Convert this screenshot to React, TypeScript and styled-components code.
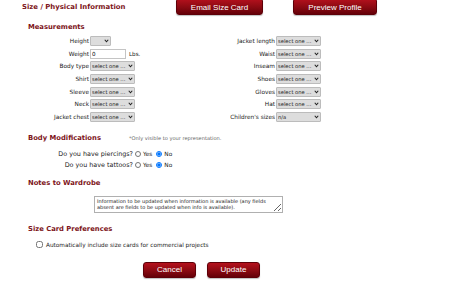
import styled, { createGlobalStyle } from "styled-components";

const GlobalStyle = createGlobalStyle`
  body {
    margin: 0;
    background: #FFFFFF;
    font-family: "DejaVu Sans", Verdana, sans-serif;
    color: #222;
  }
`;

const Page = styled.div`
  width: 460px;
  height: 293px;
  overflow: hidden;
`;

const TopBar = styled.div`
  display: flex;
  align-items: flex-start;
  height: 22px;
`;

const PageTitle = styled.h1`
  margin: 3px 0 0 22px;
  width: 154px;
  font-size: 6.9px;
  font-weight: bold;
  color: #7d1420;
  line-height: 9px;
`;

const RedButton = styled.button<{ $w: number }>`
  width: ${(p) => p.$w}px;
  height: 16px;
  padding: 0;
  border: 1px solid #5e0008;
  border-radius: 3px;
  background: linear-gradient(#b5111d, #8a0a12 55%, #650008);
  box-shadow: 0 1px 1px rgba(0, 0, 0, 0.25);
  color: #fff;
  font-family: "Liberation Sans", Arial, sans-serif;
  font-size: 8px;
  line-height: 14px;
`;

const TopButton = styled(RedButton)`
  margin-top: -2px;
  height: 17px;
  line-height: 17px;
`;

const Section = styled.section<{ $top: number }>`
  margin-top: ${(p) => p.$top}px;
  padding-left: 28px;
`;

const SectionTitle = styled.h2`
  margin: 0;
  font-size: 6.8px;
  font-weight: bold;
  color: #7d1420;
  line-height: 8px;
`;

const TitleRow = styled.div`
  display: flex;
  align-items: baseline;
`;

const Note = styled.span`
  margin-left: 28px;
  font-size: 5.1px;
  color: #666;
`;

const MeasureGrid = styled.div`
  display: grid;
  grid-template-columns: 62px 124px 62px auto;
  grid-auto-rows: 12.6px;
  align-items: center;
  margin-top: 4px;
`;

const Label = styled.label<{ $size?: number }>`
  text-align: right;
  padding-right: 1px;
  font-size: ${(p) => p.$size ?? 5.8}px;
  white-space: nowrap;
  color: #222;
`;

const Control = styled.div`
  display: flex;
  align-items: center;
  gap: 3px;
  font-size: 5.6px;
`;

const SelectWrap = styled.span<{ $w: number }>`
  position: relative;
  display: inline-block;
  width: ${(p) => p.$w}px;
  height: 10px;
`;

const Select = styled.select`
  appearance: none;
  width: 100%;
  height: 100%;
  box-sizing: border-box;
  padding: 0 0 0 1px;
  border: 1px solid #bcbcbc;
  border-radius: 1px;
  background: #dddddd;
  font-family: "DejaVu Sans", Verdana, sans-serif;
  font-size: 5.2px;
  color: #222;
`;

const Chevron = styled.svg`
  position: absolute;
  right: 2px;
  top: 3px;
  width: 5px;
  height: 4px;
  pointer-events: none;
`;

const TextInput = styled.input`
  width: 36px;
  height: 10px;
  box-sizing: border-box;
  padding: 0 1px;
  border: 1px solid #c4c4c4;
  font-family: "DejaVu Sans", Verdana, sans-serif;
  font-size: 5.6px;
`;

const QuestionGrid = styled.div`
  display: grid;
  grid-template-columns: 106px auto;
  grid-auto-rows: 10.5px;
  align-items: center;
  margin-top: 7px;
`;

const Radio = styled.input`
  width: 6px;
  height: 6px;
  margin: 0 2px 0 1px;
`;

const RadioText = styled.span`
  font-size: 5.8px;
  margin-right: 3px;
`;

const NotesBox = styled.textarea`
  display: block;
  margin: 9px 0 0 66px;
  width: 189px;
  height: 17px;
  box-sizing: border-box;
  padding: 1px 2px;
  resize: both;
  border: 1px solid #b0b0b0;
  font-family: "DejaVu Sans", Verdana, sans-serif;
  font-size: 5px;
  line-height: 6px;
  color: #222;
`;

const CheckRow = styled.label`
  display: flex;
  align-items: center;
  margin: 8px 0 0 8px;
  font-size: 5.75px;
  color: #222;
`;

const Check = styled.input`
  width: 7px;
  height: 7px;
  margin: 0 3px 0 0;
`;

const Actions = styled.div`
  display: flex;
  gap: 11px;
  margin: 14px 0 0 143px;
`;

const selectOne = "select one ...";

function Dropdown({ w, value }: { w: number; value: string }) {
  return (
    <SelectWrap $w={w}>
      <Select defaultValue={value}>
        <option value={value}>{value}</option>
      </Select>
      <Chevron viewBox="0 0 10 8">
        <path d="M1.5 1.5 L5 5.5 L8.5 1.5" fill="none" stroke="#222" strokeWidth="2.2" />
      </Chevron>
    </SelectWrap>
  );
}

const leftRows: [string, React.ReactNode][] = [
  ["Height", <Dropdown w={21} value="" />],
  ["Weight", <><TextInput defaultValue="0" /><span>Lbs.</span></>],
  ["Body type", <Dropdown w={45} value={selectOne} />],
  ["Shirt", <Dropdown w={45} value={selectOne} />],
  ["Sleeve", <Dropdown w={45} value={selectOne} />],
  ["Neck", <Dropdown w={45} value={selectOne} />],
  ["Jacket chest", <Dropdown w={45} value={selectOne} />],
];

const rightRows: [string, string][] = [
  ["Jacket length", selectOne],
  ["Waist", selectOne],
  ["Inseam", selectOne],
  ["Shoes", selectOne],
  ["Gloves", selectOne],
  ["Hat", selectOne],
  ["Children's sizes", "n/a"],
];

export default function App() {
  return (
    <Page>
      <GlobalStyle />
      <TopBar>
        <PageTitle>Size / Physical Information</PageTitle>
        <TopButton $w={87}>Email Size Card</TopButton>
        <TopButton $w={84} style={{ marginLeft: 30 }}>Preview Profile</TopButton>
      </TopBar>

      <Section $top={1}>
        <SectionTitle>Measurements</SectionTitle>
        <MeasureGrid>
          {leftRows.map(([label, control], i) => (
            <Row key={label} label={label} control={control} right={rightRows[i]} />
          ))}
        </MeasureGrid>
      </Section>

      <Section $top={11}>
        <TitleRow>
          <SectionTitle>Body Modifications</SectionTitle>
          <Note>*Only visible to your representation.</Note>
        </TitleRow>
        <QuestionGrid>
          <Question text="Do you have piercings?" name="piercings" />
          <Question text="Do you have tattoos?" name="tattoos" />
        </QuestionGrid>
      </Section>

      <Section $top={9}>
        <SectionTitle>Notes to Wardrobe</SectionTitle>
        <NotesBox defaultValue="Information to be updated when information is available (any fields absent are fields to be updated when info is available)." />
      </Section>

      <Section $top={12}>
        <SectionTitle>Size Card Preferences</SectionTitle>
        <CheckRow>
          <Check type="checkbox" />
          Automatically include size cards for commercial projects
        </CheckRow>
      </Section>

      <Actions>
        <RedButton $w={53}>Cancel</RedButton>
        <RedButton $w={53}>Update</RedButton>
      </Actions>
    </Page>
  );
}

function Row({ label, control, right }: { label: string; control: React.ReactNode; right: [string, string] }) {
  return (
    <>
      <Label>{label}</Label>
      <Control>{control}</Control>
      <Label>{right[0]}</Label>
      <Control>
        <Dropdown w={45} value={right[1]} />
      </Control>
    </>
  );
}

function Question({ text, name }: { text: string; name: string }) {
  return (
    <>
      <Label $size={6.4}>{text}</Label>
      <Control style={{ gap: 0 }}>
        <Radio type="radio" name={name} />
        <RadioText>Yes</RadioText>
        <Radio type="radio" name={name} defaultChecked />
        <RadioText>No</RadioText>
      </Control>
    </>
  );
}
